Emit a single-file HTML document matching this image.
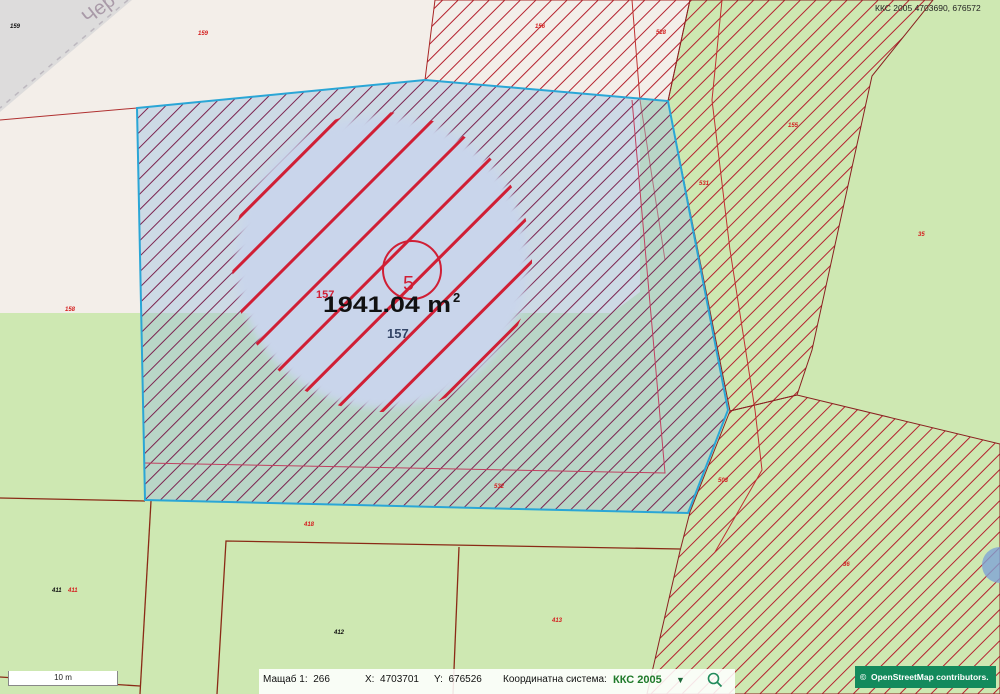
<!DOCTYPE html>
<html><head><meta charset="utf-8"><style>
html,body{margin:0;padding:0;width:1000px;height:694px;overflow:hidden;background:#cee8b2;font-family:"Liberation Sans",sans-serif}
.lbl{font-family:"Liberation Sans",sans-serif;font-size:6px;font-style:italic;font-weight:bold}
.bb span{position:absolute;top:0}
</style></head><body>
<svg width="1000" height="694" viewBox="0 0 1000 694" xmlns="http://www.w3.org/2000/svg" style="position:absolute;left:0;top:0">
<defs>
<pattern id="h" width="11" height="11" patternUnits="userSpaceOnUse" patternTransform="rotate(-45)">
<line x1="0" y1="5" x2="11" y2="5" stroke="#b5202e" stroke-width="1"/></pattern>
<pattern id="hp" width="11" height="11" patternUnits="userSpaceOnUse" patternTransform="rotate(-45)">
<line x1="0" y1="5" x2="11" y2="5" stroke="#7c2350" stroke-width="1"/></pattern>
<pattern id="big" width="34" height="34" patternUnits="userSpaceOnUse" patternTransform="rotate(-45)">
<line x1="0" y1="17" x2="34" y2="17" stroke="#d01f35" stroke-width="3"/></pattern>
<filter id="bl"><feGaussianBlur stdDeviation="4"/></filter>
<clipPath id="cc"><circle cx="382" cy="262" r="150"/></clipPath>
</defs>
<rect width="1000" height="694" fill="#cee8b2"/>
<polygon points="0,0 690,0 668,101 640,100 640,292 612,313 0,313" fill="#f3eee9"/>
<polygon points="0,0 132,0 0,112" fill="#dddcdc"/>
<line x1="128" y1="0" x2="0" y2="108" stroke="#bdb8bf" stroke-width="1.5" stroke-dasharray="5,6"/>
<text x="82" y="18" transform="rotate(-38 95 12)" font-size="20" fill="#a99aa8" font-family="Liberation Sans,sans-serif">Чер</text>
<line x1="0" y1="120" x2="137" y2="108" stroke="#b03030" stroke-width="1"/>
<polygon points="435,0 690,0 668,101 425,80" fill="url(#h)" stroke="#a82424" stroke-width="1"/>
<polygon points="690,0 933,0 872,76 812,350 797,395 730,411 668,101" fill="url(#h)" stroke="#8a2020" stroke-width="1"/>
<polygon points="730,411 797,395 1000,444 1000,694 647,694 680,551 690,512" fill="url(#h)" stroke="#8a2020" stroke-width="1"/>
<polyline points="632,0 640,100 665,260" fill="none" stroke="#c03030" stroke-width="1"/>
<polyline points="722,0 712,100 730,250 755,410 762,470 715,552" fill="none" stroke="#c03030" stroke-width="1"/>
<g stroke="#8a2a16" stroke-width="1.3" fill="none">
<line x1="0" y1="498" x2="145" y2="501"/>
<line x1="151" y1="501" x2="140" y2="694"/>
<polyline points="217,694 226,541 680,549"/>
<line x1="459" y1="547" x2="453" y2="694"/>
<line x1="0" y1="677" x2="140" y2="686"/>
</g>
<polygon points="137,108 425,80 668,101 728,410 688,513 145,500" fill="#9fc0e0" fill-opacity="0.45"/>
<polygon points="137,108 425,80 668,101 728,410 688,513 145,500" fill="url(#hp)"/>
<polyline points="632,100 665,473 145,463" fill="none" stroke="#c04060" stroke-width="1"/>
<circle cx="382" cy="262" r="146" fill="#c9d5eb" filter="url(#bl)"/>
<rect x="230" y="110" width="310" height="310" fill="url(#big)" clip-path="url(#cc)"/>
<polygon points="137,108 425,80 668,101 728,410 688,513 145,500" fill="none" stroke="#2aa6d6" stroke-width="2"/>
<circle cx="412" cy="270" r="29" fill="none" stroke="#d01f35" stroke-width="2"/>
<text x="403" y="290" font-size="20" fill="#d01f35" font-family="Liberation Sans,sans-serif">5</text>
<text x="316" y="298" font-size="11" fill="#d01f35" font-family="Liberation Sans,sans-serif" font-weight="bold">157</text>
<text x="387" y="338" font-size="13" fill="#334466" font-family="Liberation Sans,sans-serif" font-weight="bold">157</text>
<text x="323" y="312" font-size="22" font-weight="bold" fill="#111" font-family="Liberation Sans,sans-serif" textLength="128" lengthAdjust="spacingAndGlyphs">1941.04 m</text>
<text x="453" y="302" font-size="13" font-weight="bold" fill="#111" font-family="Liberation Sans,sans-serif">2</text>
<g class="lbl" fill="#d42020">
<text x="198" y="35">159</text><text x="65" y="311">158</text><text x="535" y="28">156</text><text x="656" y="34">528</text>
<text x="788" y="127">155</text><text x="699" y="185">531</text><text x="918" y="236">35</text>
<text x="718" y="482">503</text><text x="843" y="566">36</text><text x="494" y="488">532</text>
<text x="304" y="526">418</text><text x="68" y="592">411</text><text x="552" y="622">413</text>
</g>
<g class="lbl" fill="#111"><text x="10" y="28">159</text><text x="52" y="592">411</text><text x="334" y="634">412</text></g>
<text x="875" y="11" font-size="8.5" fill="#222" font-family="Liberation Sans,sans-serif">ККС 2005 4703690, 676572</text>
<circle cx="1000" cy="565" r="18" fill="#7fa3d6" fill-opacity="0.8"/>
</svg>
<div style="position:absolute;left:8px;top:671px;width:108px;height:14px;background:#fff;border:1px solid #888;border-top:none;font-size:8px;text-align:center;line-height:14px;color:#222">10 m</div>
<div class="bb" style="position:absolute;left:259px;top:669px;width:476px;height:25px;background:rgba(255,255,255,0.88);font-size:10px;color:#111;line-height:22px;white-space:nowrap">
<span style="left:4px">Мащаб 1:&nbsp; 266</span>
<span style="left:106px">X:&nbsp; 4703701</span>
<span style="left:175px">Y:&nbsp; 676526</span>
<span style="left:244px">Координатна система:</span>
<span style="left:354px;color:#1f7a2a;font-weight:bold;font-size:11px">ККС 2005</span>
<span style="left:417px;font-size:9px;color:#1f6a3a">▼</span>
<svg style="position:absolute;left:448px;top:3px" width="16" height="16" viewBox="0 0 16 16"><circle cx="6.5" cy="6.5" r="5" fill="none" stroke="#1f8a5a" stroke-width="1.6"/><line x1="10" y1="10" x2="14.5" y2="14.5" stroke="#1f8a5a" stroke-width="1.8"/></svg>
</div>
<div style="position:absolute;left:855px;top:666px;width:141px;height:22px;background:#138a5c;color:#fff;font-size:8.5px;font-weight:bold;line-height:22px;white-space:nowrap;padding-left:5px;box-sizing:border-box;overflow:hidden">©&nbsp; OpenStreetMap contributors.</div>
</body></html>
